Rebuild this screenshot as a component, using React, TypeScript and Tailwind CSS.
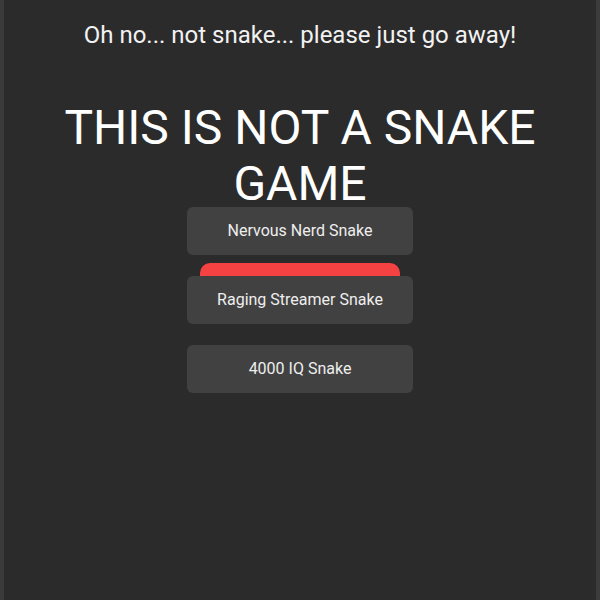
export default function App() {
  const options = ["Nervous Nerd Snake", "Raging Streamer Snake", "4000 IQ Snake"];
  return (
    <div
      className="flex h-[600px] w-[600px] bg-[#2b2b2b] text-white"
      style={{ fontFamily: "Roboto, 'Noto Sans', sans-serif" }}
    >
      <div className="w-[4px] bg-[#3a3a3a]" />
      <div className="flex flex-1 flex-col items-center">
        <p className="mt-[21px] text-[24px] leading-[28px] text-[#f2f2f2]">
          Oh no... not snake... please just go away!
        </p>
        <h1 className="mt-[51px] w-[480px] text-center text-[48px] leading-[56px] text-white">
          THIS IS NOT A SNAKE GAME
        </h1>
        <div className="mt-[-5px] flex flex-col gap-[21px]">
          <button className="flex h-[48px] w-[226px] items-center justify-center rounded-[6px] bg-[#414141] text-[16px] text-[#eeeeee]">
            {options[0]}
          </button>
          <div className="relative">
            <div className="absolute left-[13px] top-[-13px] h-[20px] w-[200px] rounded-t-[10px] bg-[#f44242]" />
            <button className="relative flex h-[48px] w-[226px] items-center justify-center rounded-[6px] bg-[#414141] text-[16px] text-[#eeeeee]">
              {options[1]}
            </button>
          </div>
          <button className="flex h-[48px] w-[226px] items-center justify-center rounded-[6px] bg-[#414141] text-[16px] text-[#eeeeee]">
            {options[2]}
          </button>
        </div>
      </div>
      <div className="w-[4px] bg-[#3c3c3c]" />
    </div>
  );
}
